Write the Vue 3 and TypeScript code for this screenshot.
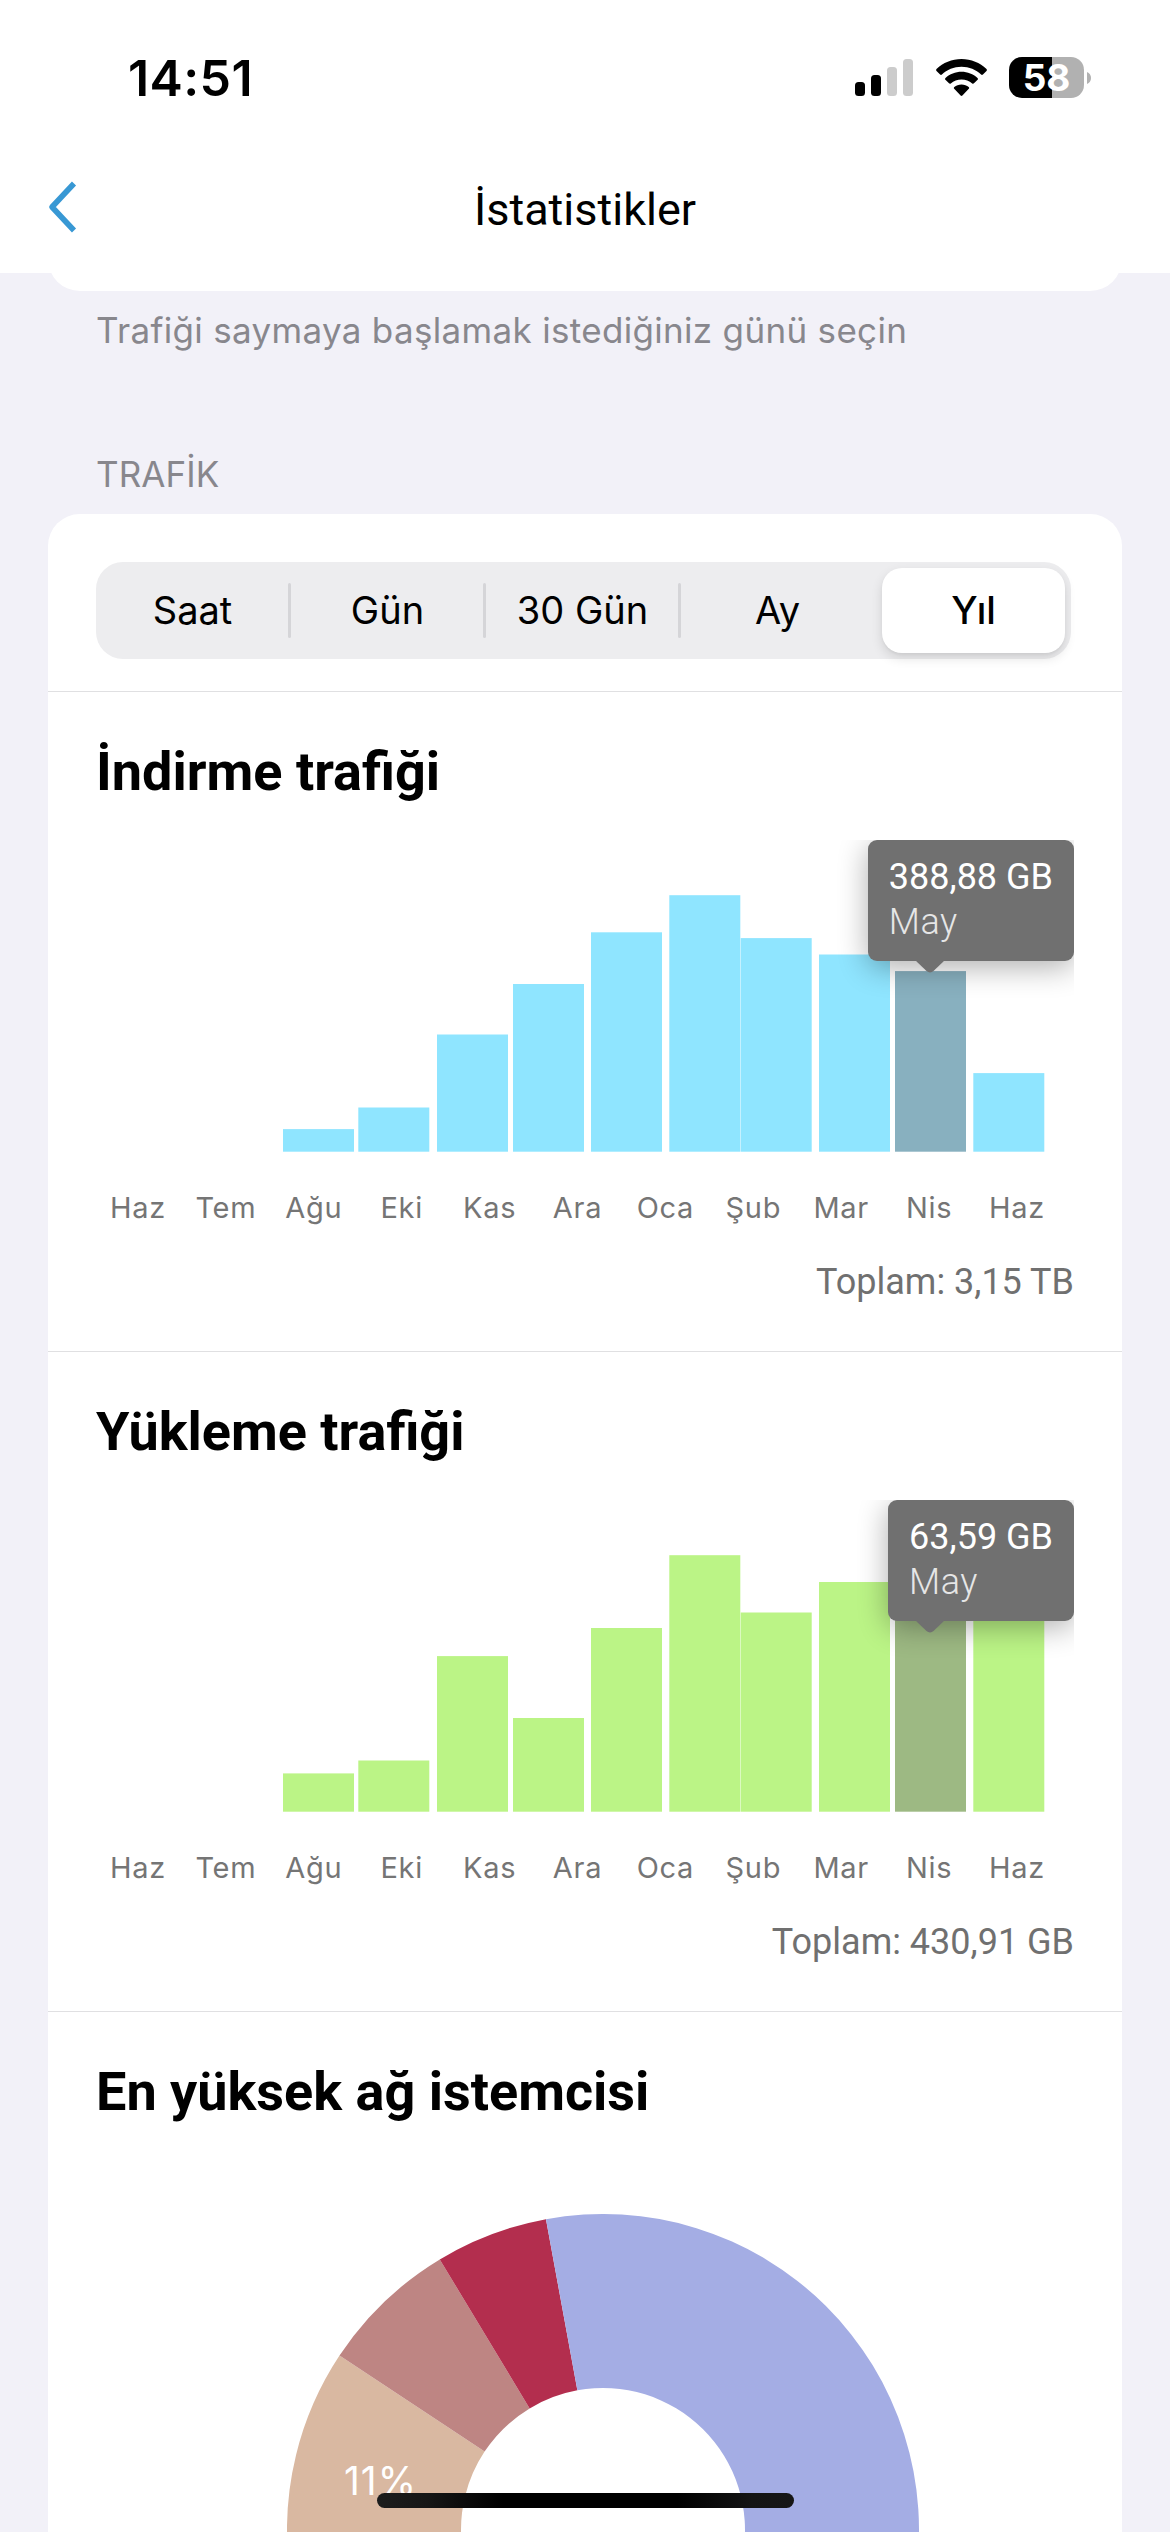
<script setup lang="ts">
interface Bar {
  x: number
  height: number
  active?: boolean
}

interface TrafficChart {
  id: string
  title: string
  value: string
  total: string
  bars: Bar[]
}

const periods = ['Saat', 'Gün', '30 Gün', 'Ay', 'Yıl']
const selectedPeriod = 'Yıl'

const months = ['Haz', 'Tem', 'Ağu', 'Eki', 'Kas', 'Ara', 'Oca', 'Şub', 'Mar', 'Nis', 'Haz']

const barX = [187, 262.3, 341, 417, 495, 573.3, 644.7, 723, 799, 877.3]
const activeIndex = 8

const toBars = (heights: number[]): Bar[] =>
  heights.map((height, i) => ({ x: barX[i], height, active: i === activeIndex }))

const charts: TrafficChart[] = [
  {
    id: 'download',
    title: 'İndirme trafiği',
    value: '388,88 GB',
    total: 'Toplam: 3,15 TB',
    bars: toBars([22.6, 44.2, 117.2, 167.7, 219.4, 256.5, 213.6, 197.2, 180.6, 78.6]),
  },
  {
    id: 'upload',
    title: 'Yükleme trafiği',
    value: '63,59 GB',
    total: 'Toplam: 430,91 GB',
    bars: toBars([38.3, 51.2, 155.6, 93.7, 183.7, 256.5, 199.2, 229.7, 210, 200]),
  },
]

const cx = 316
const cy = 316
const outer = 316
const inner = 142

const point = (r: number, deg: number): string => {
  const a = (deg * Math.PI) / 180
  return `${(cx + r * Math.sin(a)).toFixed(2)} ${(cy - r * Math.cos(a)).toFixed(2)}`
}

const slice = (from: number, to: number): string =>
  `M${point(outer, from)}A${outer} ${outer} 0 0 1 ${point(outer, to)}` +
  `L${point(inner, to)}A${inner} ${inner} 0 0 0 ${point(inner, from)}Z`

const slices = [
  { color: '#d9b8a1', d: slice(-96, -56.5) },
  { color: '#be8583', d: slice(-56.5, -31.1) },
  { color: '#b32e4e', d: slice(-31.1, -10.4) },
  { color: '#a4ade4', d: slice(-10.4, 100) },
]
</script>

<template>
  <div class="screen">
    <header class="header">
      <div class="status">
        <span class="time">14:51</span>
        <div class="indicators">
          <svg class="signal" width="58" height="37" viewBox="0 0 58 37">
            <rect x="0" y="23" width="10" height="14" rx="3.5" />
            <rect x="16" y="16" width="10" height="21" rx="3.5" />
            <rect x="32" y="8" width="10" height="29" rx="3.5" fill="#ccc" />
            <rect x="48" y="0" width="10" height="37" rx="3.5" fill="#ccc" />
          </svg>
          <svg class="wifi" width="51" height="37" viewBox="0 0 51 37">
            <path d="M25.5 0C35.1 0 44 3.7 50.5 10.1c.5.5.5 1.3 0 1.8L46.900 15.500c-.5.5-1.300.5-1.800 0C40 10.600 33.100 7.700 25.500 7.700S11 10.600 5.900 15.500c-.5.5-1.300.5-1.800 0L.500 11.900c-.5-.5-.5-1.300 0-1.800C7 3.700 15.900 0 25.500 0Z" />
            <path d="M25.500 12.700c6.100 0 11.700 2.300 16 6.200.6.5.6 1.300.1 1.800L38 24.300c-.5.5-1.300.5-1.800.1-2.900-2.500-6.600-4-10.700-4s-7.800 1.500-10.700 4c-.5.4-1.300.4-1.800-.1L9.400 20.700c-.5-.5-.5-1.300.1-1.800 4.300-3.900 9.900-6.200 16-6.200Z" />
            <path d="M25.500 25.400c2.800 0 5.300 1 7.200 2.600.6.5.6 1.300.1 1.800l-6.400 6.700c-.5.5-1.300.5-1.800 0l-6.400-6.700c-.5-.5-.5-1.300.1-1.800 1.900-1.600 4.400-2.600 7.200-2.600Z" />
          </svg>
          <div class="battery"><span class="level">58</span></div>
          <svg class="nub" width="4" height="12" viewBox="0 0 4 12">
            <path d="M0 0C2.500 1 4 3.300 4 6S2.500 11 0 12Z" fill="#b1b1b1" />
          </svg>
        </div>
      </div>
      <nav class="nav">
        <svg class="back" width="30" height="54" viewBox="0 0 30 54">
          <path d="M27 3.500 5 27 27 50.500" fill="none" stroke="#3898d4" stroke-width="5.600" stroke-linejoin="round" />
        </svg>
        <h1 class="title">İstatistikler</h1>
      </nav>
    </header>

    <main>
      <div class="card-tail"></div>
      <p class="hint">Trafiği saymaya başlamak istediğiniz günü seçin</p>
      <p class="caption">TRAFİK</p>

      <div class="card">
        <div class="period-row">
          <div class="segmented">
            <button
              v-for="p in periods"
              :key="p"
              class="segment"
              :class="{ selected: p === selectedPeriod }"
            >
              <span>{{ p }}</span>
            </button>
          </div>
        </div>

        <section v-for="c in charts" :key="c.id" class="section" :class="c.id">
          <h2 class="heading">{{ c.title }}</h2>
          <div class="plot">
            <svg class="bars" width="978" height="312" viewBox="0 0 978 312">
              <rect
                v-for="(b, i) in c.bars"
                :key="i"
                class="bar"
                :class="{ active: b.active }"
                :x="b.x"
                :y="311.7 - b.height"
                width="71"
                :height="b.height"
              />
            </svg>
            <div class="tooltip">
              <span class="value">{{ c.value }}</span>
              <span class="month">May</span>
              <svg class="arrow" width="30" height="14" viewBox="0 0 30 14">
                <path d="M0 0H30L18.500 11C16.500 12.900 13.500 12.900 11.500 11Z" fill="#707070" />
              </svg>
            </div>
          </div>
          <div class="labels">
            <span v-for="(m, i) in months" :key="i">{{ m }}</span>
          </div>
          <p class="total">{{ c.total }}</p>
        </section>

        <section class="section clients">
          <h2 class="heading">En yüksek ağ istemcisi</h2>
          <svg class="donut" width="632" height="318" viewBox="0 0 632 318">
            <path v-for="s in slices" :key="s.color" :d="s.d" :fill="s.color" />
            <text x="57" y="281" class="share">11%</text>
          </svg>
        </section>
      </div>
    </main>

    <div class="home-indicator"></div>
  </div>
</template>

<style>
body {
  margin: 0;
  background: #f2f1f8;
}
</style>

<style scoped>
.screen {
  position: relative;
  width: 1170px;
  height: 2532px;
  overflow: hidden;
  background: #f2f1f8;
  color: #000;
  font-family: Roboto, "Liberation Sans", sans-serif;
}

h1,
h2,
p {
  margin: 0;
  font-weight: 400;
}

svg {
  display: block;
}

.header {
  height: 273px;
  background: #fff;
}

.status {
  display: flex;
  align-items: center;
  justify-content: space-between;
  height: 155px;
  padding: 0 79px 0 128px;
}

.time {
  font: 600 50px/60px Inter, sans-serif;
  letter-spacing: 0.4px;
}

.indicators {
  display: flex;
  align-items: center;
}

.wifi {
  margin: 0 22px 0 23px;
}

.battery {
  display: flex;
  align-items: center;
  justify-content: center;
  width: 75px;
  height: 41px;
  border-radius: 13px;
  background: linear-gradient(90deg, #000 43px, #b1b1b1 43px);
}

.level {
  color: #fff;
  font: 700 37px/41px Inter, sans-serif;
}

.nub {
  margin-left: 3px;
}

.nav {
  display: grid;
  grid-template-columns: 120px 1fr 120px;
  height: 118px;
}

.back {
  margin: 25px 0 0 47px;
}

.title {
  padding-top: 25px;
  text-align: center;
  font-size: 45px;
  line-height: 60px;
}

.card-tail {
  height: 60px;
  margin: -42px 48px 0;
  border-radius: 0 0 32px 32px;
  background: #fff;
}

.hint,
.caption {
  padding-left: 96px;
  color: #88878d;
  font-family: Inter, sans-serif;
  font-size: 35px;
  line-height: 40px;
}

.hint {
  margin-top: 19px;
  letter-spacing: 0.32px;
}

.caption {
  margin: 104px 0 20px;
  letter-spacing: 0.1px;
}

.card {
  margin: 0 48px;
  border-radius: 32px 32px 0 0;
  background: #fff;
}

.period-row {
  box-sizing: border-box;
  height: 178px;
  padding: 48px 51px 0 48px;
  border-bottom: 1px solid #e0e0e2;
}

.segmented {
  display: grid;
  grid-template-columns: repeat(5, 1fr);
  height: 97px;
  border-radius: 27px;
  background: #ededef;
}

.segment {
  display: flex;
  align-items: center;
  justify-content: center;
  position: relative;
  padding: 0 2px 2px 0;
  border: 0;
  background: none;
  color: #000;
  font: 400 38px/50px Inter, sans-serif;
  letter-spacing: 0;
}

.segment:nth-child(-n + 3)::after {
  content: "";
  position: absolute;
  top: 21px;
  right: 0;
  width: 3px;
  height: 55px;
  border-radius: 2px;
  background: #d5d5d8;
}

.segment.selected {
  margin: 6px;
  padding: 0 0 2px;
  border-radius: 20px;
  background: #fff;
  box-shadow: 0 5px 12px rgba(0, 0, 0, 0.12), 0 2px 3px rgba(0, 0, 0, 0.04);
  font-weight: 500;
}

.section {
  box-sizing: border-box;
  height: 660px;
  padding: 50px 48px 0;
  border-bottom: 1px solid #e0e0e2;
}

.heading {
  font-size: 54px;
  font-weight: 700;
  line-height: 60px;
}

.plot {
  position: relative;
  height: 350px;
  margin-top: 38px;
  overflow: hidden;
}

.bar {
  fill: #8fe5ff;
}

.bar.active {
  fill: #88b0bf;
}

.upload .bar {
  fill: #bbf486;
}

.upload .bar.active {
  fill: #9db983;
}

.tooltip {
  display: flex;
  flex-direction: column;
  position: absolute;
  top: 0;
  right: 0;
  box-sizing: border-box;
  height: 121px;
  padding: 15px 21px 0;
  border-radius: 9px;
  background: #707070;
  box-shadow: 0 6px 30px rgba(0, 0, 0, 0.32);
  color: #fff;
  font-size: 36px;
  line-height: 45px;
}

.month {
  color: #e6e6e6;
  font-weight: 300;
  letter-spacing: 0.5px;
}

.arrow {
  position: absolute;
  top: 120px;
  right: 129px;
}

.labels {
  display: grid;
  grid-template-columns: repeat(11, 1fr);
  width: 967px;
  margin-left: -2px;
  color: #757575;
  font-family: Inter, sans-serif;
  font-size: 29px;
  line-height: 36px;
  letter-spacing: 0.7px;
  text-align: center;
}

.total {
  margin-top: 34px;
  color: #707070;
  font-size: 36px;
  line-height: 44px;
  text-align: right;
}

.clients {
  border-bottom: 0;
}

.donut {
  margin: 92px 0 0 191px;
}

.share {
  fill: #fff;
  font: 400 39px Inter, sans-serif;
  letter-spacing: 1px;
}

.home-indicator {
  position: absolute;
  bottom: 24px;
  left: 377px;
  width: 417px;
  height: 15px;
  border-radius: 8px;
  background: linear-gradient(90deg, #1c1c1c 0, #161616 12%, #000 30%, #000 72%, #141414 90%, #161616);
}
</style>
